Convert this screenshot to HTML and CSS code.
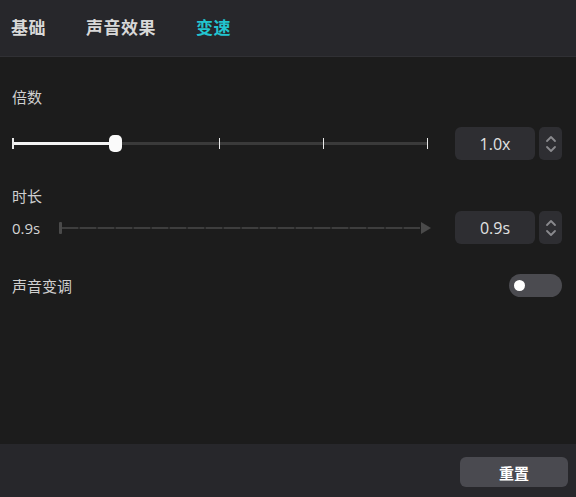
FILE: index.html
```html
<!DOCTYPE html>
<html>
<head>
<meta charset="utf-8">
<link rel="stylesheet" href="styles.css">
</head>
<body>
<div class="app">
  <div class="tabs">
    <div class="tab">基础</div>
    <div class="tab">声音效果</div>
    <div class="tab active">变速</div>
  </div>
  <div class="content">
    <div class="label first">倍数</div>
    <div class="row row1">
      <div class="slider">
        <div class="track"></div>
        <div class="fill"></div>
        <div class="tick t0"></div>
        <div class="tick t1"></div>
        <div class="tick t2"></div>
        <div class="tick t3"></div>
        <div class="thumb"></div>
      </div>
      <div class="num">1.0x</div>
      <div class="stepper">
        <svg width="12" height="22" viewBox="0 0 12 22"><path d="M2 8 L6 4 L10 8 M2 14 L6 18 L10 14" fill="none" stroke="#8a8a8e" stroke-width="1.8" stroke-linecap="round" stroke-linejoin="round"/></svg>
      </div>
    </div>
    <div class="label second">时长</div>
    <div class="row row2">
      <div class="val">0.9s</div>
      <div class="dslider">
        <div class="cap"></div>
        <div class="dash"></div>
        <svg class="arrow" width="12" height="14" viewBox="0 0 12 14"><path d="M1 1 L11 7 L1 13 Z" fill="#4a4a4a"/></svg>
      </div>
      <div class="num">0.9s</div>
      <div class="stepper">
        <svg width="12" height="22" viewBox="0 0 12 22"><path d="M2 8 L6 4 L10 8 M2 14 L6 18 L10 14" fill="none" stroke="#8a8a8e" stroke-width="1.8" stroke-linecap="round" stroke-linejoin="round"/></svg>
      </div>
    </div>
    <div class="row toggle-row">
      <div class="label plain">声音变调</div>
      <div class="toggle"><div class="knob"></div></div>
    </div>
  </div>
  <div class="footer">
    <button class="reset">重置</button>
  </div>
</div>
</body>
</html>
```
FILE: styles.css
```css
* { box-sizing: border-box; }
html, body { margin: 0; padding: 0; }
body {
  width: 576px; height: 497px; overflow: hidden;
  background: #1c1c1c;
  font-family: "Noto Sans CJK SC", "Open Sans", sans-serif;
}
.app { display: flex; flex-direction: column; height: 497px; }
.tabs {
  height: 57px; background: #27272b;
  border-bottom: 1px solid #303034;
  display: flex; align-items: center; padding-left: 11px; gap: 40px;
  padding-bottom: 3px;
}
.tab { font-size: 17px; font-weight: 700; color: #d8d8d8; letter-spacing: 0.5px; }
.tab.active { color: #22c4cf; }
.content { flex: 1; padding: 0 14px 0 12px; display: flex; flex-direction: column; }
.label { font-size: 15px; color: #cfcfcf; line-height: 20px; }
.label.first { margin-top: 30px; }
.label.second { margin-top: 26px; }
.row { display: flex; align-items: center; }
.row1 { margin-top: 20px; height: 33px; }
.slider { position: relative; width: 416px; height: 33px; margin-right: 27px; }
.track { position: absolute; left: 0; right: 0; top: 15px; height: 3px; background: #3a3a3a; border-radius: 2px; }
.fill { position: absolute; left: 0; width: 104px; top: 15px; height: 3px; background: #f4f4f4; }
.tick { position: absolute; top: 11px; width: 1px; height: 11px; background: #e8e8e8; }
.t0 { left: 0; width: 2px; }
.t1 { left: 207px; }
.t2 { left: 311px; }
.t3 { left: 415px; }
.thumb { position: absolute; left: 97px; top: 8px; width: 13px; height: 17px; background: #fafafa; border-radius: 5px; }
.num {
  width: 80px; height: 33px; background: #2e2e32; border-radius: 6px;
  color: #e2e2e2; font-family: "Open Sans", sans-serif; font-size: 16px;
  display: flex; align-items: center; justify-content: center;
}
.stepper {
  width: 23px; height: 33px; margin-left: 4px; background: #2e2e32; border-radius: 5px;
  display: flex; align-items: center; justify-content: center;
}
.row2 { margin-top: 5px; height: 33px; }
.val { width: 47px; font-family: "Open Sans", sans-serif; font-size: 15px; color: #d4d4d4; }
.dslider { position: relative; width: 375px; height: 33px; margin-right: 21px; }
.cap { position: absolute; left: 0; top: 11px; width: 3px; height: 12px; background: #4a4a4a; border-radius: 1px; }
.dash {
  position: absolute; left: 3px; right: 14px; top: 16px; height: 2px;
  background: repeating-linear-gradient(90deg, #3e3e3e 0 16px, #2a2a2a 16px 18px);
}
.arrow { position: absolute; right: 2px; top: 10px; }
.toggle-row { margin-top: 30px; justify-content: space-between; }
.toggle { width: 53px; height: 23px; border-radius: 12px; background: #4b4b50; position: relative; }
.knob { position: absolute; left: 5px; top: 6px; width: 11px; height: 11px; border-radius: 50%; background: #ffffff; }
.footer {
  height: 53px; background: #27272b; display: flex; justify-content: flex-end; align-items: flex-start;
  padding: 13px 8px 0 0;
}
.reset {
  width: 108px; height: 30px; border: none; border-radius: 6px; background: #4a4a50;
  color: #ffffff; font-family: "Noto Sans CJK SC", sans-serif; font-size: 15px; font-weight: 700;
  display: flex; align-items: center; justify-content: center; padding: 0;
}
```
